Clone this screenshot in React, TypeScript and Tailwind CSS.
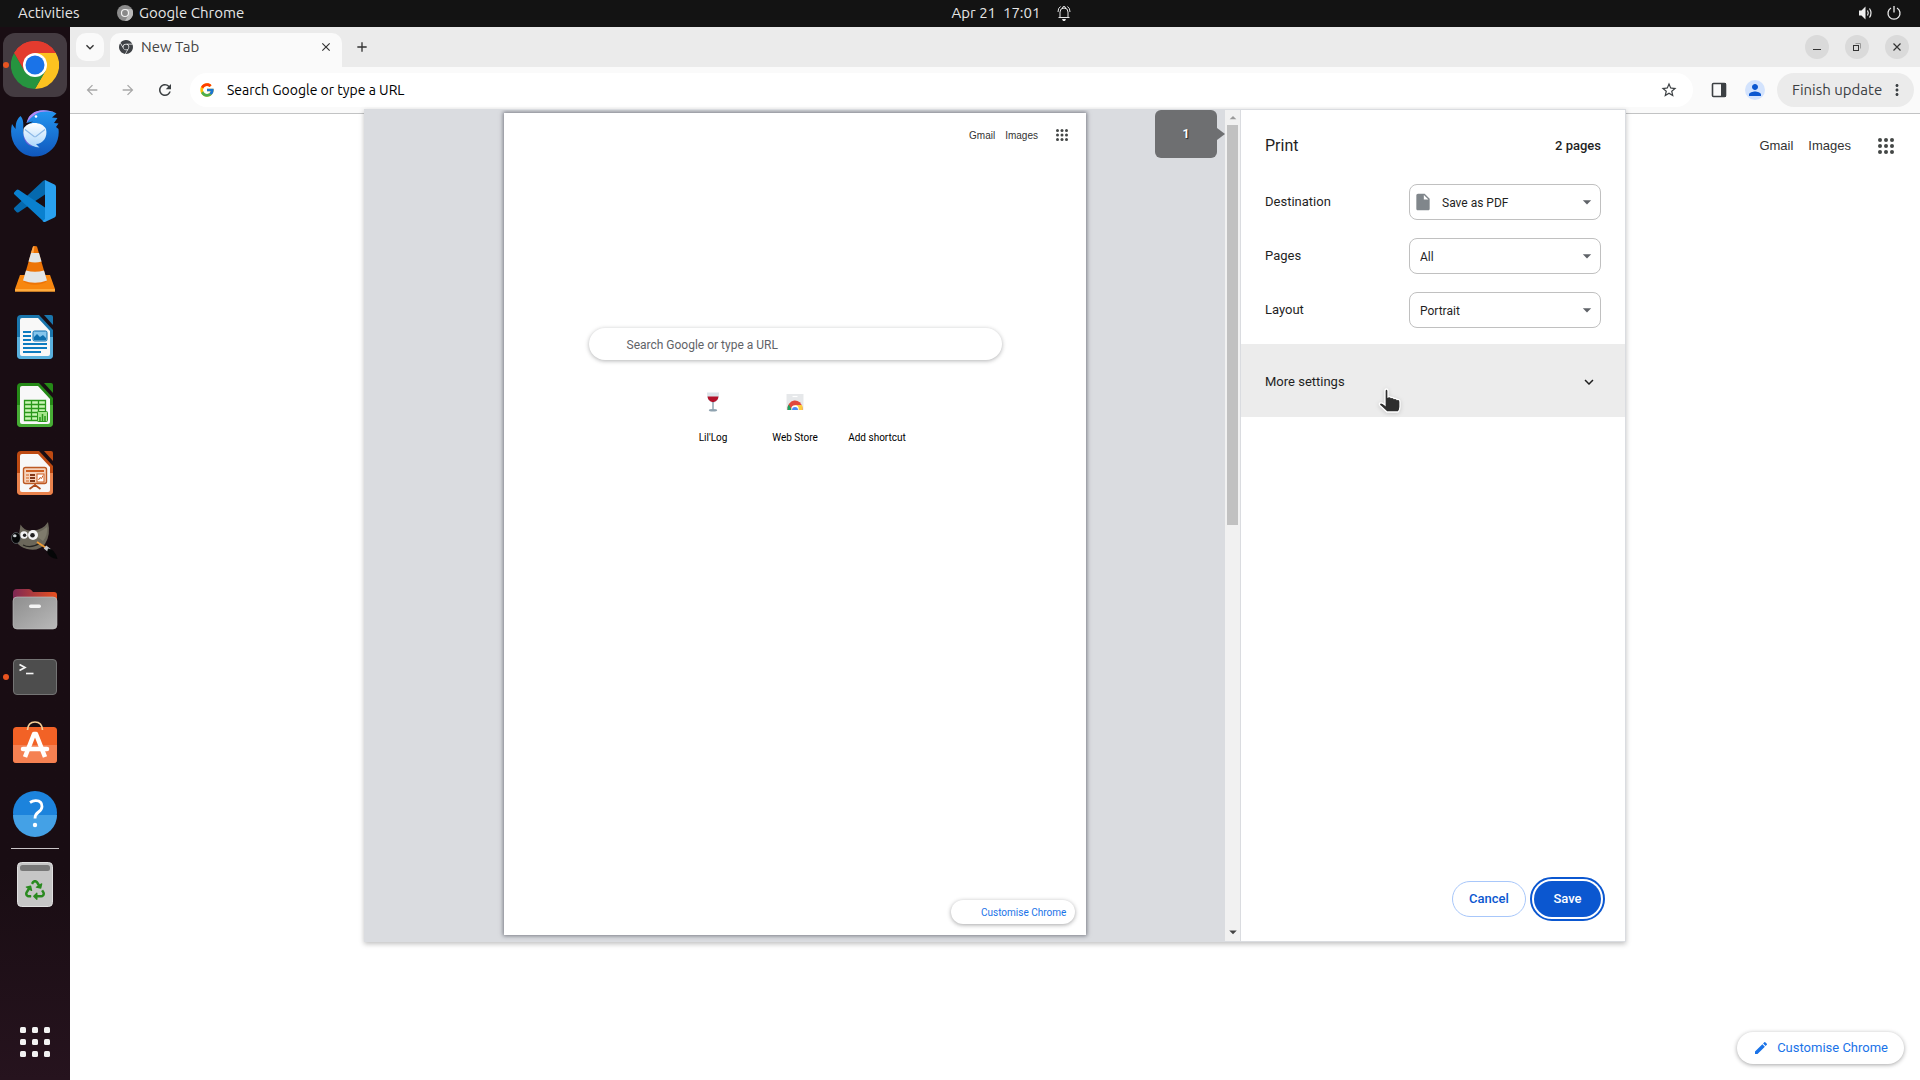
import type { ReactNode } from "react";
import { FaRecycle } from "react-icons/fa";
import { FcGoogle } from "react-icons/fc";
import {
  MdAdd,
  MdArrowBack,
  MdArrowDropDown,
  MdArrowDropUp,
  MdArrowForward,
  MdClose,
  MdEdit,
  MdExpandMore,
  MdInsertDriveFile,
  MdMoreVert,
  MdPerson,
  MdRefresh,
  MdStarBorder,
} from "react-icons/md";
import { SiGooglechrome } from "react-icons/si";

function ChromeLogo() {
  return (
    <svg viewBox="0 0 48 48" className="size-12">
      <path d="M24 24 3.2 12A24 24 0 0 1 44.8 12Z" fill="#e33b2e" />
      <path d="M24 12H44.8A24 24 0 0 1 24 48L34.4 30Z" fill="#fcc220" />
      <path d="M13.6 30 3.2 12A24 24 0 0 0 24 48L34.4 30Z" fill="#26943f" />
      <path d="M24 12H44.8L34 24 24 24Z" fill="#fcc220" />
      <path d="M3.2 12A24 24 0 0 1 44.8 12H24L13.6 30Z" fill="#e33b2e" />
      <circle cx="24" cy="24" r="12" fill="#fff" />
      <circle cx="24" cy="24" r="9.5" fill="#1a73e8" />
    </svg>
  );
}

function ThunderbirdLogo() {
  return (
    <svg viewBox="0 0 48 48" className="size-12">
      <defs>
        <linearGradient id="tb-body" x1="0" y1="0" x2="0" y2="1">
          <stop offset="0" stopColor="#2396f0" />
          <stop offset="1" stopColor="#1057bd" />
        </linearGradient>
        <linearGradient id="tb-mail" x1="0" y1="0" x2="0" y2="1">
          <stop offset="0" stopColor="#fff" />
          <stop offset="1" stopColor="#a9d6fb" />
        </linearGradient>
      </defs>
      <path
        d="M9.500 7C4 12 5 17 4.500 20L1 15C-1 23 0 32 6 39C12 47 22 49 31 46.500C43 43 49 31 47.500 20L45 18L47.500 14.500L43 14L46.500 9L41 8.500L45.500 4.500C37 0 26 .500 21 5C17 8 17 11 15.500 14L22 12.500C17 15 13 19 14 27C10 21 15 13 9.500 7Z"
        fill="url(#tb-body)"
      />
      <path d="M21 5C26 0 37 .500 45 4C38 2 30 2 25 5C20 8 18 11 15.500 14C17 10 17 8 21 5Z" fill="#b389f5" />
      <path d="M14 20C12 28 17 34 22 37.500C15 36 10 29 14 20Z" fill="#6c60dc" />
      <circle cx="25" cy="7.500" r="1.300" fill="#fff" />
      <path d="M12.500 20C16 12 31 12 35 20C37 28 32 35 25 35L28.500 38.500C18 38 11 30 12.500 20Z" fill="url(#tb-mail)" />
      <path d="M14 20.500 23 27.500Q24 28 25 27.500L34 20.500" fill="none" stroke="#8cb9e6" strokeWidth="1.200" />
    </svg>
  );
}

function CodeLogo() {
  return (
    <svg viewBox="0 0 48 48" className="size-12">
      <path d="M34 3V17.500L8 35Q6.500 36 5.500 35L3.300 32.800Q2.300 31.500 3.500 30.500L32 4Z" fill="#0569ae" />
      <path d="M34 45V30.500L8 13Q6.500 12 5.500 13L3.300 15.200Q2.300 16.500 3.500 17.500L32 44Z" fill="#0a80cf" />
      <path d="M34 3 43.500 7.500Q45 8.300 45 10V38Q45 39.700 43.500 40.500L34 45Q32.500 45.300 31.500 44L34 42Z" fill="#29a0ef" />
    </svg>
  );
}

function VlcLogo() {
  return (
    <svg viewBox="0 0 48 48" className="size-12">
      <path d="M9 30H39L44 44V46.500H4V44Z" fill="#f7870f" />
      <path d="M4 44H44V46.500H4Z" fill="#ffab3d" />
      <path d="M22 1.500Q24 .300 26 1.500L36 36C31 41 17 41 12 36Z" fill="#ed7407" />
      <path d="M20 8H28L30.500 16.500Q24 18.500 17.500 16.500Z" fill="#e2e5e6" />
      <path d="M15 25.500Q24 28 33 25.500L36 35.500Q24 40 12 35.500Z" fill="#e2e5e6" />
      <path d="M22 1.500 19.800 8H22.500L23.500 1Z" fill="#ffa64a" />
    </svg>
  );
}

function OfficeDocument({ dark, light, children }: { dark: string; light: string; children: ReactNode }) {
  return (
    <svg viewBox="0 0 48 48" className="size-12">
      <path d="M10 2H28L42 17V42Q42 46 38 46H10Q6 46 6 42V6Q6 2 10 2Z" fill={dark} />
      <path d="M6 24H42V42Q42 46 38 46H10Q6 46 6 42Z" fill={light} />
      <path d="M11 5H27L39 18V41Q39 43 37 43H11Q9 43 9 41V7Q9 5 11 5Z" fill="#f8f8f8" />
      <path d="M33 2H40Q42 2 42 4V12Z" fill={dark} />
      {children}
    </svg>
  );
}

function WriterLogo() {
  return (
    <OfficeDocument dark="#1a76ad" light="#59b0dd">
      <path d="M12 19H20M12 23H20M12 27H20M12 31H36M12 35H36M12 39H30" stroke="#0e7cc0" strokeWidth="2" />
      <rect x="22" y="18" width="14" height="10" rx="1.500" fill="#85c5ec" stroke="#0e6fae" />
      <path d="M23 27V24L26 21L29 24L32 22L35 25V27Z" fill="#0e6fae" />
    </OfficeDocument>
  );
}

function CalcLogo() {
  return (
    <OfficeDocument dark="#258a17" light="#47ad35">
      <rect x="13.500" y="19.500" width="21" height="20" fill="#c9f5b5" />
      <path d="M13.500 19.500H34.500V39.500H13.500ZM20.500 19.500V39.500M27.500 19.500V39.500M13.500 23.500H34.500M13.500 27.500H34.500M13.500 31.500H34.500M13.500 35.500H34.500" fill="none" stroke="#2a971b" strokeWidth="1.300" />
      <rect x="26.500" y="30.500" width="10" height="10" rx="1" fill="#a4e58a" stroke="#2a971b" />
      <path d="M29 40V36M31.500 40V33M34 40V35" stroke="#2a971b" strokeWidth="1.500" />
    </OfficeDocument>
  );
}

function ImpressLogo() {
  return (
    <OfficeDocument dark="#bd4a12" light="#e9834d">
      <rect x="12.500" y="18.500" width="23" height="16" rx="2" fill="#f6d4bd" stroke="#bd5a24" strokeWidth="1.400" />
      <path d="M15 22H33" stroke="#cc5d20" strokeWidth="2" />
      <path d="M15 26H18M15 29H18M15 32H18" stroke="#e59a6d" strokeWidth="2" />
      <path d="M19 26H24M19 29H24M19 32H24" stroke="#83391a" strokeWidth="2" />
      <rect x="26" y="25" width="7" height="8" fill="#fff" stroke="#cc5d20" />
      <path d="M27.500 31 29 28.500 30.500 29.500 32 26.500" fill="none" stroke="#cc5d20" />
      <path d="M24 35V37M24 36 18.500 40M24 36 29.500 40" stroke="#ad491a" strokeWidth="1.700" />
    </OfficeDocument>
  );
}

function GimpLogo() {
  return (
    <svg viewBox="0 0 48 48" className="size-12">
      <path d="M9.500 7.500Q14 15 22 13.500Q32 13 37 5Q40 18 34 27Q27 35 16 32Q8 30 5 24L8 18Z" fill="#6b675a" />
      <path d="M12 14Q24 20 36 10Q37 18 32 24Q25 18 12 14Z" fill="#7f7b6c" />
      <ellipse cx="5" cy="21" rx="4.500" ry="5.500" fill="#050607" stroke="#5c6266" strokeWidth=".8" />
      <ellipse cx="3.800" cy="18.800" rx="1.800" ry="1.500" fill="#cdd3d6" />
      <circle cx="13" cy="18" r="3.700" fill="#f4f4f4" />
      <circle cx="13.600" cy="18.200" r="1.700" fill="#222" />
      <circle cx="22" cy="18" r="5" fill="#f4f4f4" />
      <circle cx="21.500" cy="18.200" r="2.300" fill="#222" />
      <path d="M12 28Q20 32 29 26" fill="none" stroke="#24231f" strokeWidth="1.300" />
      <path d="M26 25 36 31.500" stroke="#ee9b35" strokeWidth="2" />
      <path d="M34 30 39 34" stroke="#c9ccce" strokeWidth="4" />
      <path d="M37 31.500Q44 32 46.500 42Q38 41 36 35Z" fill="#050607" />
    </svg>
  );
}

function FilesLogo() {
  return (
    <svg viewBox="0 0 48 48" className="size-12">
      <defs>
        <linearGradient id="files-back" x1="0" x2="1">
          <stop offset="0" stopColor="#7e2854" />
          <stop offset="1" stopColor="#e85120" />
        </linearGradient>
        <linearGradient id="files-front" x1="0" y1="0" x2="1" y2="1">
          <stop offset="0" stopColor="#8e8e8e" />
          <stop offset="1" stopColor="#b9b9b9" />
        </linearGradient>
      </defs>
      <path d="M2 8Q2 4 6 4H18Q20 4 22 7H43Q46 7 46 10V25H2Z" fill="url(#files-back)" />
      <rect x="2" y="12" width="44" height="32" rx="4" fill="url(#files-front)" stroke="#c4c4c4" strokeWidth=".6" />
      <rect x="18" y="19.500" width="12" height="3.500" rx="1.700" fill="#f4f4f4" />
    </svg>
  );
}

function TerminalLogo() {
  return (
    <svg viewBox="0 0 48 48" className="size-12">
      <rect x="2.500" y="6.500" width="43" height="35" rx="3.500" fill="#4d4d4d" stroke="#747474" />
      <path d="M8.500 11.500 14 14.500 8.500 17.500" fill="none" stroke="#f5f5f5" strokeWidth="1.700" />
      <path d="M15 20.500H22.500" stroke="#f5f5f5" strokeWidth="1.600" />
    </svg>
  );
}

function SoftwareLogo() {
  return (
    <svg viewBox="0 0 48 48" className="size-12">
      <rect x="2" y="6" width="44" height="36" rx="3.500" fill="#f26226" />
      <path d="M2 24H46V38.500Q46 42 42.500 42H5.500Q2 42 2 38.500Z" fill="#f58152" />
      <path d="M16.500 9Q17 1 24 1T31.500 9" fill="none" stroke="#f6cf98" strokeWidth="1.700" />
      <path d="M14 36 23 13H25L34 36" fill="none" stroke="#fff" strokeWidth="4.500" strokeLinejoin="round" />
      <path d="M12 28H36" stroke="#fff" strokeWidth="4.500" strokeLinecap="round" />
    </svg>
  );
}

function HelpLogo() {
  return (
    <svg viewBox="0 0 48 48" className="size-12">
      <circle cx="24" cy="24" r="22" fill="#1c83dc" />
      <path d="M2 26H46A22 22 0 0 1 2 26Z" fill="#44a1e6" />
      <path d="M19 13.500Q22 11.500 25 11.700Q31 12 31 17.500Q31 20.500 27.500 23Q24 25.500 24 29.500" fill="none" stroke="#fff" strokeWidth="2.800" />
      <circle cx="24" cy="36" r="2.200" fill="#fff" />
    </svg>
  );
}

function TrashLogo() {
  return (
    <svg viewBox="0 0 48 48" className="size-12">
      <rect x="6.500" y="2.500" width="35" height="44" rx="4" fill="#c6c6c6" stroke="#e0e0e0" />
      <rect x="9" y="5" width="30" height="6" rx="2.500" fill="#787878" />
      <FaRecycle x={14} y={20} size={20} color="#2a8a20" />
    </svg>
  );
}

function AppsGrid() {
  return (
    <svg viewBox="0 0 48 48" className="size-12" fill="#f2f2f2">
      {[9, 21, 33].map((y) => [9, 21, 33].map((x) => <rect key={`${x}-${y}`} x={x} y={y} width="6" height="6" rx="1.500" />))}
    </svg>
  );
}

function GoogleApps({ className }: { className: string }) {
  return (
    <svg viewBox="0 0 16 16" className={className} fill="#444746">
      {[2, 8, 14].map((y) => [2, 8, 14].map((x) => <circle key={`${x}-${y}`} cx={x} cy={y} r="2" />))}
    </svg>
  );
}

function DockItem({ label, active, running, children }: { label: string; active?: boolean; running?: boolean; children: ReactNode }) {
  return (
    <button
      aria-label={label}
      className={`relative flex size-16 shrink-0 items-center justify-center rounded-xl ${active ? "bg-[#443b41]" : ""}`}
    >
      {children}
      {running && <span className="absolute top-[29px] left-0 size-1.5 rounded-full bg-[#e95420]" />}
    </button>
  );
}

function Dock() {
  return (
    <nav aria-label="Dock" className="flex w-[70px] shrink-0 flex-col items-center gap-1 bg-linear-to-b from-[#190d13] from-80% to-[#26131e] pt-1.5 pb-1.5">
      <DockItem label="Google Chrome" active running><ChromeLogo /></DockItem>
      <DockItem label="Thunderbird"><ThunderbirdLogo /></DockItem>
      <DockItem label="Visual Studio Code"><CodeLogo /></DockItem>
      <DockItem label="VLC"><VlcLogo /></DockItem>
      <DockItem label="LibreOffice Writer"><WriterLogo /></DockItem>
      <DockItem label="LibreOffice Calc"><CalcLogo /></DockItem>
      <DockItem label="LibreOffice Impress"><ImpressLogo /></DockItem>
      <DockItem label="GIMP"><GimpLogo /></DockItem>
      <DockItem label="Files"><FilesLogo /></DockItem>
      <DockItem label="Terminal" running><TerminalLogo /></DockItem>
      <DockItem label="Software"><SoftwareLogo /></DockItem>
      <DockItem label="Help"><HelpLogo /></DockItem>
      <div className="-my-px h-px w-12 shrink-0 bg-[#c9c5c7]" />
      <DockItem label="Trash"><TrashLogo /></DockItem>
      <div className="flex-1" />
      <DockItem label="Show applications"><AppsGrid /></DockItem>
    </nav>
  );
}

function TopBar() {
  return (
    <header className="grid h-[27px] shrink-0 grid-cols-[1fr_auto_1fr] items-center bg-[#131313] px-[18px] pb-0.5 text-[15px] leading-6 text-[#e6e6e6]">
      <div className="flex items-center">
        <button className="w-[63px] text-left">Activities</button>
        <button className="ml-9 flex items-center gap-1.5 whitespace-nowrap">
          <svg viewBox="0 0 16 16" className="size-4">
            <circle cx="8" cy="8" r="8" fill="#8b8b8b" />
            <path d="M8 4H15A8 8 0 0 1 8 16L11.500 10Z" fill="#b9b9b9" />
            <circle cx="8" cy="8" r="3.500" fill="#888" stroke="#f2f2f2" strokeWidth="1.200" />
          </svg>
          Google Chrome
        </button>
      </div>
      <button className="flex items-center gap-4 pl-[104px]">
        <span className="whitespace-pre">Apr 21  17:01</span>
        <svg viewBox="0 0 16 16" className="size-4" fill="none" stroke="#e6e6e6">
          <path d="M2.500 12.500H13.500M4 12V7Q4 3 8 3T12 7V12M6.500 3Q6.500 1.500 8 1.500T9.500 3M2 7Q2 3 4.500 1.500M14 7Q14 3 11.500 1.500" />
          <path d="M6 14H10L9 16H7Z" fill="#e6e6e6" stroke="none" />
        </svg>
      </button>
      <button aria-label="System menu" className="flex items-center gap-3 justify-self-end">
        <svg viewBox="0 0 16 16" className="size-4" fill="none" stroke="#eee" strokeWidth="1.200">
          <path d="M1 5.500H3.500L7.500 1.500V14.500L3.500 10.500H1Z" fill="#eee" stroke="none" />
          <path d="M9.500 5.500Q11 8 9.500 10.500M11.500 3.500Q14.500 8 11.500 12.500" />
        </svg>
        <svg viewBox="0 0 16 16" className="size-4" fill="none" stroke="#eee" strokeWidth="1.300">
          <path d="M5 3A6 6 0 1 0 11 3M8 1V7.500" />
        </svg>
      </button>
    </header>
  );
}

function TabStrip() {
  return (
    <div className="flex h-10 shrink-0 items-end bg-[#ebebeb] pl-1.5">
      <button aria-label="Search tabs" className="mb-1.5 flex size-7 items-center justify-center rounded-[10px] bg-[#fafafa]">
        <MdExpandMore className="size-4 text-[#333]" />
      </button>
      <div className="ml-1.5 flex h-[34px] w-[232px] items-center rounded-t-[10px] bg-[#fafafa] pb-1.5 pl-[9px]">
        <SiGooglechrome className="size-3.5 text-[#3f4246]" />
        <span className="ml-2 flex-1 text-[15px] leading-6 text-[#444]">New Tab</span>
        <button aria-label="Close tab" className="mr-[9px]"><MdClose className="size-3.5 text-[#333]" /></button>
      </div>
      <button aria-label="New tab" className="mb-3 ml-3"><MdAdd className="size-4 text-[#333]" /></button>
      <div className="mr-[11px] mb-2 ml-auto flex gap-4">
        <button aria-label="Minimise" className="flex size-6 items-center justify-center rounded-full bg-[#dadada]">
          <svg viewBox="0 0 10 10" className="size-2.5"><path d="M1 7.500H9" stroke="#333" /></svg>
        </button>
        <button aria-label="Restore" className="flex size-6 items-center justify-center rounded-full bg-[#dadada]">
          <svg viewBox="0 0 10 10" className="size-2.5" fill="none">
            <path d="M3.500 1.500H8.500V6.500" stroke="#999" />
            <rect x="1.500" y="3.500" width="5" height="5" stroke="#333" />
          </svg>
        </button>
        <button aria-label="Close window" className="flex size-6 items-center justify-center rounded-full bg-[#dadada]">
          <svg viewBox="0 0 10 10" className="size-2.5"><path d="M1.500 1.500 8.500 8.500M8.500 1.500 1.500 8.500" stroke="#333" strokeWidth="1.200" /></svg>
        </button>
      </div>
    </div>
  );
}

function Toolbar() {
  return (
    <div className="flex h-[47px] shrink-0 items-center border-b border-[#c2c3c4] bg-[#fafafa] pr-1.5 pl-3.5 text-[#3c4043]">
      <div className="flex items-center gap-5">
        <button aria-label="Back"><MdArrowBack className="size-4 text-[#a8a8a8]" /></button>
        <button aria-label="Forward"><MdArrowForward className="size-4 text-[#a8a8a8]" /></button>
        <button aria-label="Reload"><MdRefresh className="size-[18px]" /></button>
      </div>
      <div className="ml-4 flex h-[34px] flex-1 items-center gap-3 rounded-full bg-white pr-[15px] pl-[9px]">
        <FcGoogle className="size-4" />
        <input
          aria-label="Address bar"
          defaultValue="Search Google or type a URL"
          className="min-w-0 flex-1 bg-transparent text-sm text-black outline-none"
        />
        <button aria-label="Bookmark"><MdStarBorder className="size-[18px]" /></button>
      </div>
      <button aria-label="Side panel" className="ml-[18px]">
        <svg viewBox="0 0 16 16" className="size-4">
          <rect x="1.500" y="1.500" width="13" height="13" rx="1" fill="none" stroke="#3c4043" strokeWidth="1.600" />
          <rect x="10" y="1" width="5" height="14" fill="#3c4043" />
        </svg>
      </button>
      <button aria-label="Profile" className="ml-[18px] flex size-5 items-center justify-center rounded-full bg-[#d3e3fd]">
        <MdPerson className="size-[18px] text-[#0b57d0]" />
      </button>
      <button className="ml-3 flex h-[34px] w-[137px] items-center justify-between rounded-full bg-[#ebebeb] pr-2 pl-[15px] text-[15px] whitespace-nowrap">
        Finish update
        <MdMoreVert className="size-[18px]" />
      </button>
    </div>
  );
}

function WineGlass() {
  return (
    <svg viewBox="0 0 20 20" className="size-5">
      <path d="M4 .500H16Q16.500 9.500 10 11Q3.500 9.500 4 .500Z" fill="#dbe4ea" />
      <path d="M4.500 4.500H15.500Q15 9 10 10.300Q5 9 4.500 4.500Z" fill="#b3122b" />
      <path d="M10 10V18" stroke="#8fa3b0" strokeWidth="1.500" />
      <ellipse cx="10" cy="18.300" rx="4.200" ry="1.200" fill="#8fa3b0" />
    </svg>
  );
}

function WebStoreIcon() {
  return (
    <svg viewBox="0 0 20 20" className="size-5">
      <path d="M1.500 2H18.500V18H1.500Z" fill="#e6e8ea" />
      <path d="M7.500 4.500H12.500" stroke="#fff" strokeWidth="1.200" />
      <path d="M2.500 18A7.500 8.500 0 0 1 17.500 16V18Z" fill="#e2483c" />
      <path d="M2.500 18Q2 15 3.700 12.500L7 18Z" fill="#1da260" />
      <path d="M10 13H17Q18 15 17.500 18H12Z" fill="#fdcd40" />
      <circle cx="10" cy="17" r="3.700" fill="#fff" />
      <path d="M7 18A3 3 0 1 1 13 18Z" fill="#4a8af4" />
    </svg>
  );
}

const shortcuts = [
  { label: "Lil'Log", icon: <WineGlass /> },
  { label: "Web Store", icon: <WebStoreIcon /> },
  { label: "Add shortcut", icon: null },
];

function PreviewPage() {
  return (
    <article className="mt-[3px] mb-1.5 flex w-[582px] flex-col bg-white shadow-[0_0_4px_1px_rgba(60,64,75,0.6)]">
      <div className="flex h-11 items-center justify-end gap-2.5 pr-[18px] font-['Liberation_Sans',sans-serif] text-[10px] text-[#333]">
        <span>Gmail</span>
        <span>Images</span>
        <GoogleApps className="ml-2 size-3" />
      </div>
      <div className="mx-auto mt-[171px] flex h-8 w-[413px] shrink-0 items-center rounded-full bg-white pt-px pl-[38px] text-xs text-[#5f6368] shadow-[0_1px_4px_rgba(32,33,36,0.35)]">
        Search Google or type a URL
      </div>
      <ul className="mt-8 flex justify-center">
        {shortcuts.map((s) => (
          <li key={s.label} className="flex w-[82px] flex-col items-center text-[10px] leading-4 whitespace-nowrap text-black">
            <span className="mb-[18px] flex size-5">{s.icon}</span>
            {s.label}
          </li>
        ))}
      </ul>
      <div className="mt-auto mr-[11px] mb-[11px] flex h-6 w-[124px] items-center self-end rounded-full pr-3 pl-[30px] text-[10px] whitespace-nowrap text-[#1a73e8] shadow-[0_1px_4px_rgba(32,33,36,0.4)]">
        Customise Chrome
      </div>
    </article>
  );
}

function SettingRow({ id, label, value, icon }: { id: string; label: string; value: string; icon?: ReactNode }) {
  return (
    <div className="flex h-[54px] items-center justify-between px-6">
      <label htmlFor={id}>{label}</label>
      <div className="grid w-48 items-center">
        <select
          id={id}
          defaultValue={value}
          className={`col-start-1 row-start-1 h-9 w-full appearance-none rounded-lg border border-[#c0c0c0] bg-white pt-0.5 text-xs text-[#1f1f1f] ${icon ? "pl-8" : "pl-2.5"}`}
        >
          <option>{value}</option>
        </select>
        {icon && <span className="pointer-events-none col-start-1 row-start-1 ml-1">{icon}</span>}
        <MdArrowDropDown className="pointer-events-none col-start-1 row-start-1 mr-1 size-5 justify-self-end text-[#5f6368]" />
      </div>
    </div>
  );
}

function HandCursor() {
  return (
    <svg viewBox="0 0 24 26" className="pointer-events-none absolute top-[44px] left-[137px] h-[26px] w-6 drop-shadow-sm">
      <path
        d="M7 3Q7 1 8.500 1T10 3V9Q12 8 13 9.500Q15 9 16 10.500Q18 10 19 11.500Q22 11 22 14V19Q22 22 20 24H9L2 17.500Q.500 15.500 2.500 15Q4 14.500 7 17Z"
        fill="#2e2e2e"
        stroke="#fff"
        strokeWidth="1.300"
      />
    </svg>
  );
}

function PrintDialog() {
  return (
    <section
      role="dialog"
      aria-label="Print"
      className="absolute inset-x-[294px] top-[82px] bottom-[138px] flex border border-[#dadce0] bg-white font-[Roboto,sans-serif] shadow-[0_2px_5px_rgba(0,0,0,0.25)]"
    >
      <div className="relative flex min-w-0 flex-1 justify-center overflow-hidden bg-[#dadce0]">
        <PreviewPage />
        <div className="absolute top-0 right-0 flex items-center">
          <div className="flex h-12 w-[62px] items-center justify-center rounded-md bg-[#6e6f71] text-xs font-bold text-white [text-shadow:1px_1px_1px_#222]">
            1
          </div>
          <svg viewBox="0 0 8 12" className="h-3 w-2"><path d="M0 0 8 6 0 12Z" fill="#6e6f71" /></svg>
        </div>
      </div>
      <div className="flex w-[15px] flex-col items-center bg-[#f1f1f1]">
        <MdArrowDropUp className="-mb-px size-4 shrink-0 text-[#9a9a9a]" />
        <div className="h-[400px] w-[11px] bg-[#c1c1c1]" />
        <MdArrowDropDown className="mt-auto size-[18px] shrink-0 text-[#444]" />
      </div>
      <aside className="flex w-[385px] flex-col border-l border-[#dadce0] text-[13px] text-[#1f1f1f]">
        <div className="flex h-[65px] items-center justify-between px-6 pt-1.5">
          <h1 className="text-base">Print</h1>
          <span className="font-medium">2 pages</span>
        </div>
        <SettingRow id="destination" label="Destination" value="Save as PDF" icon={<MdInsertDriveFile className="size-5 text-[#80868b]" />} />
        <SettingRow id="pages" label="Pages" value="All" />
        <SettingRow id="layout" label="Layout" value="Portrait" />
        <button className="relative mt-[7px] flex h-[73px] items-center justify-between bg-[#ececec] pt-0.5 pr-[27px] pl-6 text-left">
          More settings
          <MdExpandMore className="size-[18px]" />
          <HandCursor />
        </button>
        <div className="mt-auto flex justify-end gap-2 px-6 pb-6">
          <button className="h-9 w-[74px] rounded-full border border-[#a8c7fa] font-medium text-[#0b57d0]">Cancel</button>
          <button className="h-9 w-[67px] rounded-full bg-[#0b57d0] font-medium text-white outline-2 outline-offset-2 outline-[#0b57d0]">Save</button>
        </div>
      </aside>
    </section>
  );
}

export default function App() {
  return (
    <div className="flex h-screen flex-col overflow-hidden bg-white font-['Ubuntu','Noto_Sans',sans-serif]">
      <TopBar />
      <div className="flex min-h-0 flex-1">
        <Dock />
        <main className="relative flex min-w-0 flex-1 flex-col">
          <TabStrip />
          <Toolbar />
          <div className="flex flex-1 flex-col items-end justify-between">
            <div className="flex h-16 items-center gap-[15px] pr-[26px] font-['Liberation_Sans',sans-serif] text-[13px] text-[#333]">
              <a href="#gmail">Gmail</a>
              <a href="#images">Images</a>
              <button aria-label="Google apps" className="ml-3"><GoogleApps className="size-4" /></button>
            </div>
            <button className="mr-4 mb-4 flex h-8 items-center gap-2 rounded-full bg-white pr-4 pl-4 font-[Roboto,sans-serif] text-[13px] text-[#1a73e8] shadow-[0_1px_4px_rgba(32,33,36,0.4)]">
              <MdEdit className="size-4" />
              Customise Chrome
            </button>
          </div>
          <PrintDialog />
        </main>
      </div>
    </div>
  );
}
